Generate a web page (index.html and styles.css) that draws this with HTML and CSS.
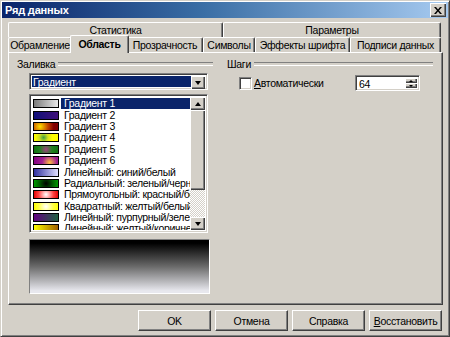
FILE: index.html
```html
<!DOCTYPE html>
<html lang="ru">
<head>
    <meta charset="UTF-8">
    <title>Ряд данных</title>
    <link rel="stylesheet" href="styles.css">
</head>
<body>
    <div class="window">
        <div class="titlebar">
            <span class="title">Ряд данных</span>
            <span class="close">
                <svg width="8" height="7" viewBox="0 0 8 7"><path d="M0 0h2l2 2.5 2-2.5h2l-3 3.5 3 3.5h-2l-2-2.5-2 2.5h-2l3-3.5z" fill="#000"/></svg>
            </span>
        </div>
        <div class="content">
            <div class="tabs">
                <div class="tabrow">
                    <div class="tab w-stat">Статистика</div>
                    <div class="tab w-param">Параметры</div>
                </div>
                <div class="tabrow">
                    <div class="tab w-frame">Обрамление</div>
                    <div class="tab active w-area">Область</div>
                    <div class="tab w-transp">Прозрачность</div>
                    <div class="tab w-symb">Символы</div>
                    <div class="tab w-font">Эффекты шрифта</div>
                    <div class="tab w-labels">Подписи данных</div>
                </div>
            </div>

            <div class="panel">
                <div class="col col-left">
                    <div class="group-head">Заливка</div>
                    <div class="group-body">
                        <div class="combo">
                            <span class="combo-value">Градиент</span>
                            <span class="btn-arrow"><span class="tri-down"></span></span>
                        </div>
                        <div class="listbox">
                            <div class="items">
                                <div class="item selected"><span class="swatch g1"></span><span class="label">Градиент 1</span></div>
                                <div class="item"><span class="swatch g2"></span><span class="label">Градиент 2</span></div>
                                <div class="item"><span class="swatch g3"></span><span class="label">Градиент 3</span></div>
                                <div class="item"><span class="swatch g4"></span><span class="label">Градиент 4</span></div>
                                <div class="item"><span class="swatch g5"></span><span class="label">Градиент 5</span></div>
                                <div class="item"><span class="swatch g6"></span><span class="label">Градиент 6</span></div>
                                <div class="item"><span class="swatch g7"></span><span class="label">Линейный: синий/белый</span></div>
                                <div class="item"><span class="swatch g8"></span><span class="label">Радиальный: зеленый/черный</span></div>
                                <div class="item"><span class="swatch g9"></span><span class="label">Прямоугольный: красный/белый</span></div>
                                <div class="item"><span class="swatch g10"></span><span class="label">Квадратный: желтый/белый</span></div>
                                <div class="item"><span class="swatch g11"></span><span class="label">Линейный: пурпурный/зеленый</span></div>
                                <div class="item"><span class="swatch g12"></span><span class="label">Линейный: желтый/коричневый</span></div>
                            </div>
                            <div class="scrollbar">
                                <span class="sb-btn"><span class="tri-up"></span></span>
                                <span class="sb-thumb"></span>
                                <span class="sb-track"></span>
                                <span class="sb-btn"><span class="tri-down"></span></span>
                            </div>
                        </div>
                        <div class="preview"></div>
                    </div>
                </div>

                <div class="col col-right">
                    <div class="group-head">Шаги</div>
                    <div class="steps-row">
                        <span class="checkbox"></span>
                        <span class="check-label"><u>А</u>втоматически</span>
                        <div class="spin">
                            <span class="spin-value">64</span>
                            <span class="spin-btns">
                                <span class="spin-btn"><span class="tri-up small"></span></span>
                                <span class="spin-btn"><span class="tri-down small"></span></span>
                            </span>
                        </div>
                    </div>
                </div>
            </div>

            <div class="buttons">
                <button>OK</button>
                <button>Отмена</button>
                <button>Справка</button>
                <button><u>В</u>осстановить</button>
            </div>
        </div>
    </div>
</body>
</html>
```

FILE: styles.css
```css
* {
    box-sizing: border-box;
}
body {
    margin: 0;
    font-family: "Liberation Sans", Arial, sans-serif;
    font-size: 10.5px;
    letter-spacing: -0.3px;
    color: #000;
}
.window {
    width: 450px;
    height: 337px;
    background: #d4d0c8;
    border: 1px solid;
    border-color: #d4d0c8 #404040 #404040 #d4d0c8;
    box-shadow: inset 1px 1px #fff, inset -1px -1px #808080;
    padding: 1px;
}

/* Title bar */
.titlebar {
    height: 16px;
    background: linear-gradient(to right, #0a246a 0%, #3a6ea5 45%, #a6caf0 100%);
    display: flex;
    align-items: center;
    justify-content: space-between;
    padding: 0 2px 0 3px;
}
.title {
    color: #fff;
    font-weight: bold;
    font-size: 11px;
    letter-spacing: -0.2px;
}
.close {
    width: 16px;
    height: 14px;
    background: #d4d0c8;
    box-shadow: inset 1px 1px #fff, inset -1px -1px #404040, inset -2px -2px #808080;
    display: flex;
    align-items: center;
    justify-content: center;
}

.content {
    padding: 4px 5px 0 6px;
}

/* Tabs */
.tabrow {
    display: flex;
    height: 15px;
}
.tab {
    height: 15px;
    line-height: 14px;
    text-align: center;
    border-top: 1px solid #fff;
    border-left: 1px solid #fff;
    border-right: 1px solid #404040;
    box-shadow: inset -1px 0 #808080;
    border-radius: 2px 2px 0 0;
    background: #d4d0c8;
    white-space: nowrap;
}
.tab.active {
    font-weight: bold;
    height: 18px;
    margin: -2px -2px -1px;
    line-height: 16px;
    z-index: 1;
}
.w-stat { width: 215px; }
.w-param { width: 218px; }
.w-frame { width: 64px; }
.w-area { width: 59px; }
.w-transp { width: 76px; }
.w-symb { width: 52px; }
.w-font { width: 95px; }
.w-labels { width: 91px; }

/* Panel */
.panel {
    height: 253px;
    border: 1px solid;
    border-color: #fff #404040 #404040 #fff;
    box-shadow: inset -1px -1px #808080;
    padding: 5px 9px 0 8px;
    display: flex;
    gap: 14px;
}
.col-left {
    width: 196px;
}
.col-right {
    flex: 1;
}
.group-head {
    display: flex;
    align-items: center;
    gap: 3px;
    height: 12px;
}
.group-head::after {
    content: '';
    flex: 1;
    height: 2px;
    border-top: 1px solid #808080;
    border-bottom: 1px solid #fff;
}
.group-body {
    padding-left: 12px;
}

/* Sunken controls */
.combo, .listbox, .spin {
    border: 1px solid;
    border-color: #808080 #fff #fff #808080;
    box-shadow: inset 1px 1px #404040, inset -1px -1px #d4d0c8;
    padding: 2px;
    background: #fff;
}
.combo {
    margin-top: 3px;
    width: 179px;
    height: 17px;
    display: flex;
}
.combo-value {
    flex: 1;
    background: #0a246a;
    color: #fff;
    line-height: 13px;
    padding-left: 1px;
}
.btn-arrow, .sb-btn, .spin-btn {
    background: #d4d0c8;
    box-shadow: inset 1px 1px #fff, inset -1px -1px #404040, inset -2px -2px #808080;
    display: flex;
    align-items: center;
    justify-content: center;
}
.btn-arrow {
    width: 14px;
    height: 13px;
}
.tri-down, .tri-up {
    width: 0;
    height: 0;
    border-left: 3.5px solid transparent;
    border-right: 3.5px solid transparent;
}
.tri-down {
    border-top: 4px solid #000;
}
.tri-up {
    border-bottom: 4px solid #000;
}
.tri-down.small {
    border-top-width: 2px;
    border-left-width: 2px;
    border-right-width: 2px;
}
.tri-up.small {
    border-bottom-width: 2px;
    border-left-width: 2px;
    border-right-width: 2px;
}

/* List */
.listbox {
    margin-top: 4px;
    width: 179px;
    height: 139px;
    display: flex;
    overflow: hidden;
}
.items {
    flex: 1;
    overflow: hidden;
    padding-top: 1px;
}
.item {
    height: 11.4px;
    display: flex;
    align-items: center;
    white-space: nowrap;
}
.swatch {
    flex: none;
    width: 26px;
    height: 9px;
    border: 1px solid #000;
    margin: 0 2px 0 1px;
}
.label {
    flex: 1;
    padding-left: 3px;
    line-height: 11px;
    overflow: hidden;
}
.item.selected .label {
    background: #0a246a;
    color: #fff;
}
.g1 { background: linear-gradient(to right, #7c7c7c, #e8e8e8); }
.g2 { background: linear-gradient(to right, #10107a, #40107a); }
.g3 { background: radial-gradient(circle at 25% 50%, #ffe000, #c04000 45%, #800000 75%); }
.g4 { background: radial-gradient(circle at 40% 50%, #40a040, #d0e020 30%, #ffff00 60%); }
.g5 { background: radial-gradient(circle at 50% 50%, #a04080, #208020 50%, #107010); }
.g6 { background: radial-gradient(circle at 65% 80%, #ffc040, #a02090 45%, #800080); }
.g7 { background: linear-gradient(to right, #3030a0, #e0e0ff); }
.g8 { background: radial-gradient(circle, #000, #006000 55%, #00a000); }
.g9 { background: radial-gradient(circle, #fff, #ff4040 60%, #e00000); }
.g10 { background: radial-gradient(circle, #fff, #ffff40 60%, #ffff00); }
.g11 { background: linear-gradient(to right, #600080, #206040); }
.g12 { background: linear-gradient(to right, #ffff00, #a06000); }

.scrollbar {
    width: 15px;
    display: flex;
    flex-direction: column;
}
.sb-btn {
    height: 13px;
}
.sb-thumb {
    height: 80px;
    background: #d4d0c8;
    box-shadow: inset 1px 1px #fff, inset -1px -1px #404040, inset -2px -2px #808080;
}
.sb-track {
    flex: 1;
    background: repeating-conic-gradient(#d4d0c8 0 25%, #fff 0 50%) 0 0 / 2px 2px;
}

.preview {
    margin-top: 6px;
    width: 181px;
    height: 55px;
    border: 1px solid;
    border-color: #808080 #fff #fff #808080;
    background: linear-gradient(to bottom, #000 6%, #6a6a6a 50%, #e8e8ee 96%);
}

/* Steps */
.steps-row {
    margin-top: 5px;
    padding-left: 12px;
    height: 16px;
    display: flex;
    align-items: center;
}
.checkbox {
    width: 13px;
    height: 13px;
    border: 1px solid;
    border-color: #808080 #fff #fff #808080;
    box-shadow: inset 1px 1px #404040, inset -1px -1px #d4d0c8;
    background: #fff;
}
.check-label {
    margin-left: 2px;
}
.spin {
    margin-left: auto;
    margin-right: 13px;
    width: 65px;
    height: 16px;
    display: flex;
}
.spin-value {
    flex: 1;
    line-height: 12px;
    padding-left: 1px;
}
.spin-btns {
    width: 12px;
    display: flex;
    flex-direction: column;
}
.spin-btn {
    flex: 1;
}

/* Dialog buttons */
.buttons {
    margin-top: 5px;
    margin-right: 1px;
    display: flex;
    justify-content: flex-end;
    gap: 4px;
}
button {
    width: 73px;
    height: 21px;
    font: inherit;
    letter-spacing: inherit;
    color: #000;
    background: #d4d0c8;
    border: 1px solid;
    border-color: #fff #404040 #404040 #fff;
    box-shadow: inset -1px -1px #808080;
    padding: 0;
}
```
